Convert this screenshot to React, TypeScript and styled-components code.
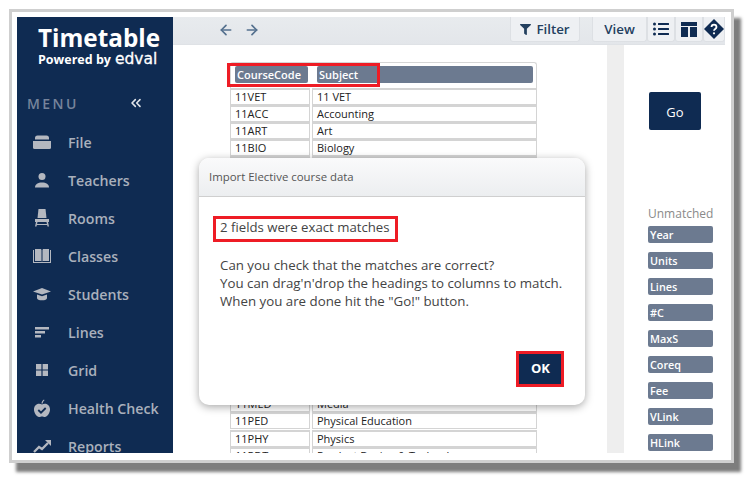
import React from 'react'
import styled, { createGlobalStyle } from 'styled-components'
import { ArrowLeft, ArrowRight, ChevronsLeft } from 'lucide-react'
import { FaFilter, FaListUl } from 'react-icons/fa'

const navy = '#0f2b52'
const chip = '#6c7a90'
const red = '#ee1c25'

const GlobalStyle = createGlobalStyle`
  html, body { margin: 0; padding: 0; background: #fff; }
  body { min-height: 480px; font-family: "Open Sans", "Noto Sans", sans-serif; }
`

const Frame = styled.div`
  box-sizing: border-box;
  width: 725px;
  height: 454px;
  margin: 0 0 0 9px;
  padding: 5px 6px 7px 5px;
  border: 3px solid #cfcfcf;
  background: #fff;
  box-shadow: 7px 9px 3px #7d7d7d;
`

const Page = styled.div`
  padding-top: 9px;
`

const AppShell = styled.div`
  position: relative;
  display: flex;
  width: 708px;
  height: 436px;
  overflow: hidden;
`

const Sidebar = styled.nav`
  flex: 0 0 156px;
  background: ${navy};
  color: #fff;
  overflow: hidden;
`

const Logo = styled.div`
  padding: 8px 0 0 21px;
  height: 50px;
  box-sizing: border-box;
`

const LogoTitle = styled.div`
  font-size: 24.3px;
  line-height: 26px;
  font-weight: 700;
`

const LogoSub = styled.div`
  display: flex;
  align-items: baseline;
  gap: 4px;
  height: 16px;
  font-size: 12.5px;
  line-height: 16px;
  font-weight: 700;
  white-space: nowrap;
`

const Edval = styled.span`
  font-family: "DejaVu Sans", sans-serif;
  font-size: 15.5px;
  line-height: 16px;
  font-weight: 400;
  -webkit-text-stroke: 0.3px #fff;
`

const MenuHead = styled.div`
  display: flex;
  align-items: center;
  justify-content: space-between;
  width: 117px;
  height: 22px;
  margin: 25px 0 9px 10px;
  color: #76849b;
  font-size: 14px;
  font-weight: 600;
  letter-spacing: 2.4px;
`

const MenuList = styled.div`
  display: flex;
  flex-direction: column;
`

const MenuItem = styled.div`
  display: flex;
  align-items: center;
  flex: 0 0 38px;
  height: 38px;
  color: #a9b0bc;
  font-size: 14.2px;
  font-weight: 600;
  white-space: nowrap;
`

const MenuIcon = styled.svg`
  flex: 0 0 18px;
  width: 18px;
  height: 18px;
  margin: 0 17px 0 16px;
  fill: #b4b8c0;
`

const Main = styled.div`
  flex: 1;
  display: flex;
  flex-direction: column;
  min-width: 0;
`

const Toolbar = styled.div`
  flex: 0 0 28px;
  display: flex;
  align-items: flex-start;
  box-sizing: border-box;
  background: linear-gradient(#e8ebee, #e3e6ea);
  border-bottom: 1px solid #dfe2e6;
  color: #22405f;
`

const NavArrows = styled.div`
  display: flex;
  gap: 10px;
  margin: 5px auto 0 45px;
  color: #54708e;
`

const ToolButton = styled.div<{ $width: number; $gap?: number }>`
  box-sizing: border-box;
  display: flex;
  align-items: center;
  justify-content: center;
  gap: 5px;
  width: ${(p) => p.$width}px;
  height: 25px;
  margin-right: ${(p) => p.$gap ?? 0}px;
  background: #eef0f3;
  border: 1px solid #dde0e4;
  border-top: 0;
  border-radius: 0 0 3px 3px;
  font-size: 13.3px;
  font-weight: 600;
  color: #24405f;
`

const Body = styled.div`
  flex: 1;
  display: flex;
  min-height: 0;
`

const TableArea = styled.div`
  flex: 0 0 434px;
  padding: 17px 0 0 57px;
  box-sizing: border-box;
  overflow: hidden;
`

const Table = styled.div`
  position: relative;
  width: 307px;
`

const HeadRow = styled.div`
  display: grid;
  grid-template-columns: 73px 216px;
  column-gap: 9px;
  box-sizing: border-box;
  height: 26px;
  padding: 3px 0 0 4px;
  border: 1px solid #d6d6d6;
  border-bottom: 0;
  border-radius: 3px 3px 0 0;
`

const HeadChip = styled.div`
  height: 17px;
  padding-left: 2px;
  background: ${chip};
  border-radius: 2px;
  color: #fff;
  font-size: 11px;
  line-height: 17px;
  font-weight: 600;
`

const Row = styled.div`
  display: grid;
  grid-template-columns: 80px 1fr;
  column-gap: 2px;
  height: 17.08px;
`

const Cell = styled.div`
  box-sizing: border-box;
  height: 17px;
  padding-left: 4px;
  border: 1px solid #d4d4d4;
  border-top-width: 2px;
  color: #222;
  font-size: 11px;
  line-height: 14px;
  white-space: nowrap;
  overflow: hidden;
`

const HeadHighlight = styled.div`
  position: absolute;
  left: -3px;
  top: 1px;
  width: 153px;
  height: 24px;
  box-sizing: border-box;
  border: 3px solid ${red};
`

const Strip = styled.div`
  flex: 0 0 17px;
  background: #eeeeee;
`

const SidePanel = styled.div`
  flex: 1;
  display: flex;
  flex-direction: column;
  align-items: flex-start;
  padding: 47px 0 0 24px;
`

const GoButton = styled.div`
  width: 52px;
  height: 38px;
  margin-left: 1px;
  background: ${navy};
  border-radius: 2px;
  color: #fff;
  font-size: 13px;
  line-height: 40px;
  text-align: center;
`

const Unmatched = styled.div`
  margin-top: 75px;
  height: 21px;
  color: #8a8a8a;
  font-size: 12px;
  line-height: 18px;
`

const ChipList = styled.div`
  display: flex;
  flex-direction: column;
  gap: 9px;
`

const FieldChip = styled.div`
  box-sizing: border-box;
  width: 65px;
  height: 17px;
  padding-left: 2px;
  background: ${chip};
  border-radius: 2px;
  color: #fff;
  font-size: 10.8px;
  line-height: 17px;
  font-weight: 600;
`

const Modal = styled.div`
  position: absolute;
  left: 182px;
  top: 141px;
  width: 386px;
  height: 247px;
  display: flex;
  flex-direction: column;
  background: #fff;
  border-radius: 10px;
  box-shadow: 0 2px 9px rgba(0, 0, 0, 0.35);
  overflow: hidden;
`

const ModalHead = styled.div`
  flex: 0 0 37px;
  box-sizing: border-box;
  padding-left: 10px;
  background: linear-gradient(#fafafb, #eceef0);
  border-bottom: 1px solid #cfcfcf;
  color: #555;
  font-size: 11.4px;
  line-height: 38px;
`

const ModalBody = styled.div`
  flex: 1;
  position: relative;
  padding: 19px 0 0 14px;
  color: #444;
`

const MatchNote = styled.div`
  box-sizing: border-box;
  width: 185px;
  height: 26px;
  padding-left: 4px;
  border: 3px solid ${red};
  font-size: 13.2px;
  line-height: 17px;
  white-space: nowrap;
`

const Help = styled.div`
  margin: 14px 0 0 7px;
  font-size: 13.3px;
  line-height: 18px;
  white-space: nowrap;
`

const OkFrame = styled.div`
  position: absolute;
  right: 21px;
  bottom: 18px;
  width: 48px;
  height: 36px;
  box-sizing: border-box;
  border: 3px solid ${red};
  background: ${navy};
  color: #fff;
  font-size: 13px;
  font-weight: 700;
  line-height: 29px;
  padding-left: 1px;
  text-align: center;
`

const menu: [string, React.ReactNode][] = [
  [
    'File',
    <>
      <path d="M0 8h18v6.5a1.5 1.5 0 0 1-1.5 1.5h-15A1.5 1.5 0 0 1 0 14.5z" />
      <path d="M2 6.5V5a2.5 2.5 0 0 1 2.5-2.5h9A2.5 2.5 0 0 1 16 5v1.5z" />
    </>,
  ],
  [
    'Teachers',
    <>
      <circle cx="9" cy="5.5" r="3.5" />
      <path d="M2 16.5c0-3.5 3-5 7-5s7 1.5 7 5z" />
    </>,
  ],
  [
    'Rooms',
    <>
      <path d="M5.5 0h7l1 9h-9z" />
      <path d="M2 10h14v3H2z" />
      <path d="M3 13l-1 4.5h1.5l1-4.5zM15 13l1 4.5h-1.5l-1-4.5zM4 15h10v1H4z" />
    </>,
  ],
  [
    'Classes',
    <>
      <path d="M0 3v13h18V3h-1v12H1V3z" />
      <path d="M2 2h6l.5 1v11.5L8 14H2zM16 2h-6l-.5 1v11.5l.5-.5h6z" />
    </>,
  ],
  [
    'Students',
    <>
      <path d="M9 3l9 3.5-9 3-9-3z" />
      <path d="M4 9.5l5 1.7 5-1.7V13c0 1.5-2 2.3-5 2.3S4 14.5 4 13z" />
    </>,
  ],
  ['Lines', <path d="M2 4h14v2.5H2zM2 8h10v2.5H2zM2 12h6v2.5H2z" />],
  ['Grid', <path d="M3 3h5.4v5.4H3zM9.6 3H15v5.4H9.6zM3 9.6h5.4V15H3zM9.6 9.6H15V15H9.6z" />],
  [
    'Health Check',
    <>
      <path d="M9 5.5C7 4 1.5 4 1 10c-.3 3.8 3 8 5 8 1.3 0 2-.5 3-.5s1.700.5 3 .5c2 0 5.300-4.200 5-8-.5-6-6-6-8-4.500z" />
      <path d="M8.500 4.500C8.600 3 9.500 1.200 11 .5l.5.7C10.300 2 9.800 3.200 9.700 4.500z" />
      <path d="M5.300 11l2.700 2.700 4.700-4.700" fill="none" stroke={navy} strokeWidth="1.800" />
    </>,
  ],
  [
    'Reports',
    <>
      <path d="M1 15l5-5 3 2 6-6" fill="none" stroke="#b4b8c0" strokeWidth="2.300" />
      <path d="M12 3h6v6z" />
    </>,
  ],
]

const rows: [string, string][] = [
  ['11VET', '11 VET'],
  ['11ACC', 'Accounting'],
  ['11ART', 'Art'],
  ['11BIO', 'Biology'],
  ...Array.from({ length: 14 }, (): [string, string] => ['', '']),
  ['11MED', 'Media'],
  ['11PED', 'Physical Education'],
  ['11PHY', 'Physics'],
  ['11PDT', 'Product Design & Technology'],
]

const fields = ['Year', 'Units', 'Lines', '#C', 'MaxS', 'Coreq', 'Fee', 'VLink', 'HLink']

export default function App() {
  return (
    <Page>
      <GlobalStyle />
      <Frame>
        <AppShell>
          <Sidebar>
            <Logo>
              <LogoTitle>Timetable</LogoTitle>
              <LogoSub>
                Powered by <Edval>edval</Edval>
              </LogoSub>
            </Logo>
            <MenuHead>
              MENU
              <ChevronsLeft size={16} color="#dfe3e8" strokeWidth={2.4} />
            </MenuHead>
            <MenuList>
              {menu.map(([label, icon]) => (
                <MenuItem key={label}>
                  <MenuIcon viewBox="0 0 18 18">{icon}</MenuIcon>
                  {label}
                </MenuItem>
              ))}
            </MenuList>
          </Sidebar>
          <Main>
            <Toolbar>
              <NavArrows>
                <ArrowLeft size={16} strokeWidth={2.5} />
                <ArrowRight size={16} strokeWidth={2.5} />
              </NavArrows>
              <ToolButton $width={70} $gap={12}>
                <FaFilter size={11} />
                Filter
              </ToolButton>
              <ToolButton $width={55}>View</ToolButton>
              <ToolButton $width={28}>
                <FaListUl size={16} color={navy} />
              </ToolButton>
              <ToolButton $width={28}>
                <svg width="16" height="15" viewBox="0 0 16 15" fill={navy}>
                  <path d="M0 0h16v4H0zM0 5h7v10H0zM9 5h7v10H9z" />
                </svg>
              </ToolButton>
              <ToolButton $width={22}>
                <svg width="20" height="20" viewBox="0 0 20 20">
                  <path d="M10 0l10 10-10 10L0 10z" fill={navy} />
                  <path d="M7.5 8c0-3.3 5-3.3 5 0 0 2-2.5 2-2.5 3.8" fill="none" stroke="#fff" strokeWidth="1.8" />
                  <circle cx="10" cy="14.3" r="1.1" fill="#fff" />
                </svg>
              </ToolButton>
            </Toolbar>
            <Body>
              <TableArea>
                <Table>
                  <HeadRow>
                    <HeadChip>CourseCode</HeadChip>
                    <HeadChip>Subject</HeadChip>
                  </HeadRow>
                  {rows.map(([code, subject], i) => (
                    <Row key={i}>
                      <Cell>{code}</Cell>
                      <Cell>{subject}</Cell>
                    </Row>
                  ))}
                  <HeadHighlight />
                </Table>
              </TableArea>
              <Strip />
              <SidePanel>
                <GoButton>Go</GoButton>
                <Unmatched>Unmatched</Unmatched>
                <ChipList>
                  {fields.map((f) => (
                    <FieldChip key={f}>{f}</FieldChip>
                  ))}
                </ChipList>
              </SidePanel>
            </Body>
          </Main>
          <Modal>
            <ModalHead>Import Elective course data</ModalHead>
            <ModalBody>
              <MatchNote>2 fields were exact matches</MatchNote>
              <Help>
                Can you check that the matches are correct?
                <br />
                You can drag'n'drop the headings to columns to match.
                <br />
                When you are done hit the "Go!" button.
              </Help>
              <OkFrame>OK</OkFrame>
            </ModalBody>
          </Modal>
        </AppShell>
      </Frame>
    </Page>
  )
}
